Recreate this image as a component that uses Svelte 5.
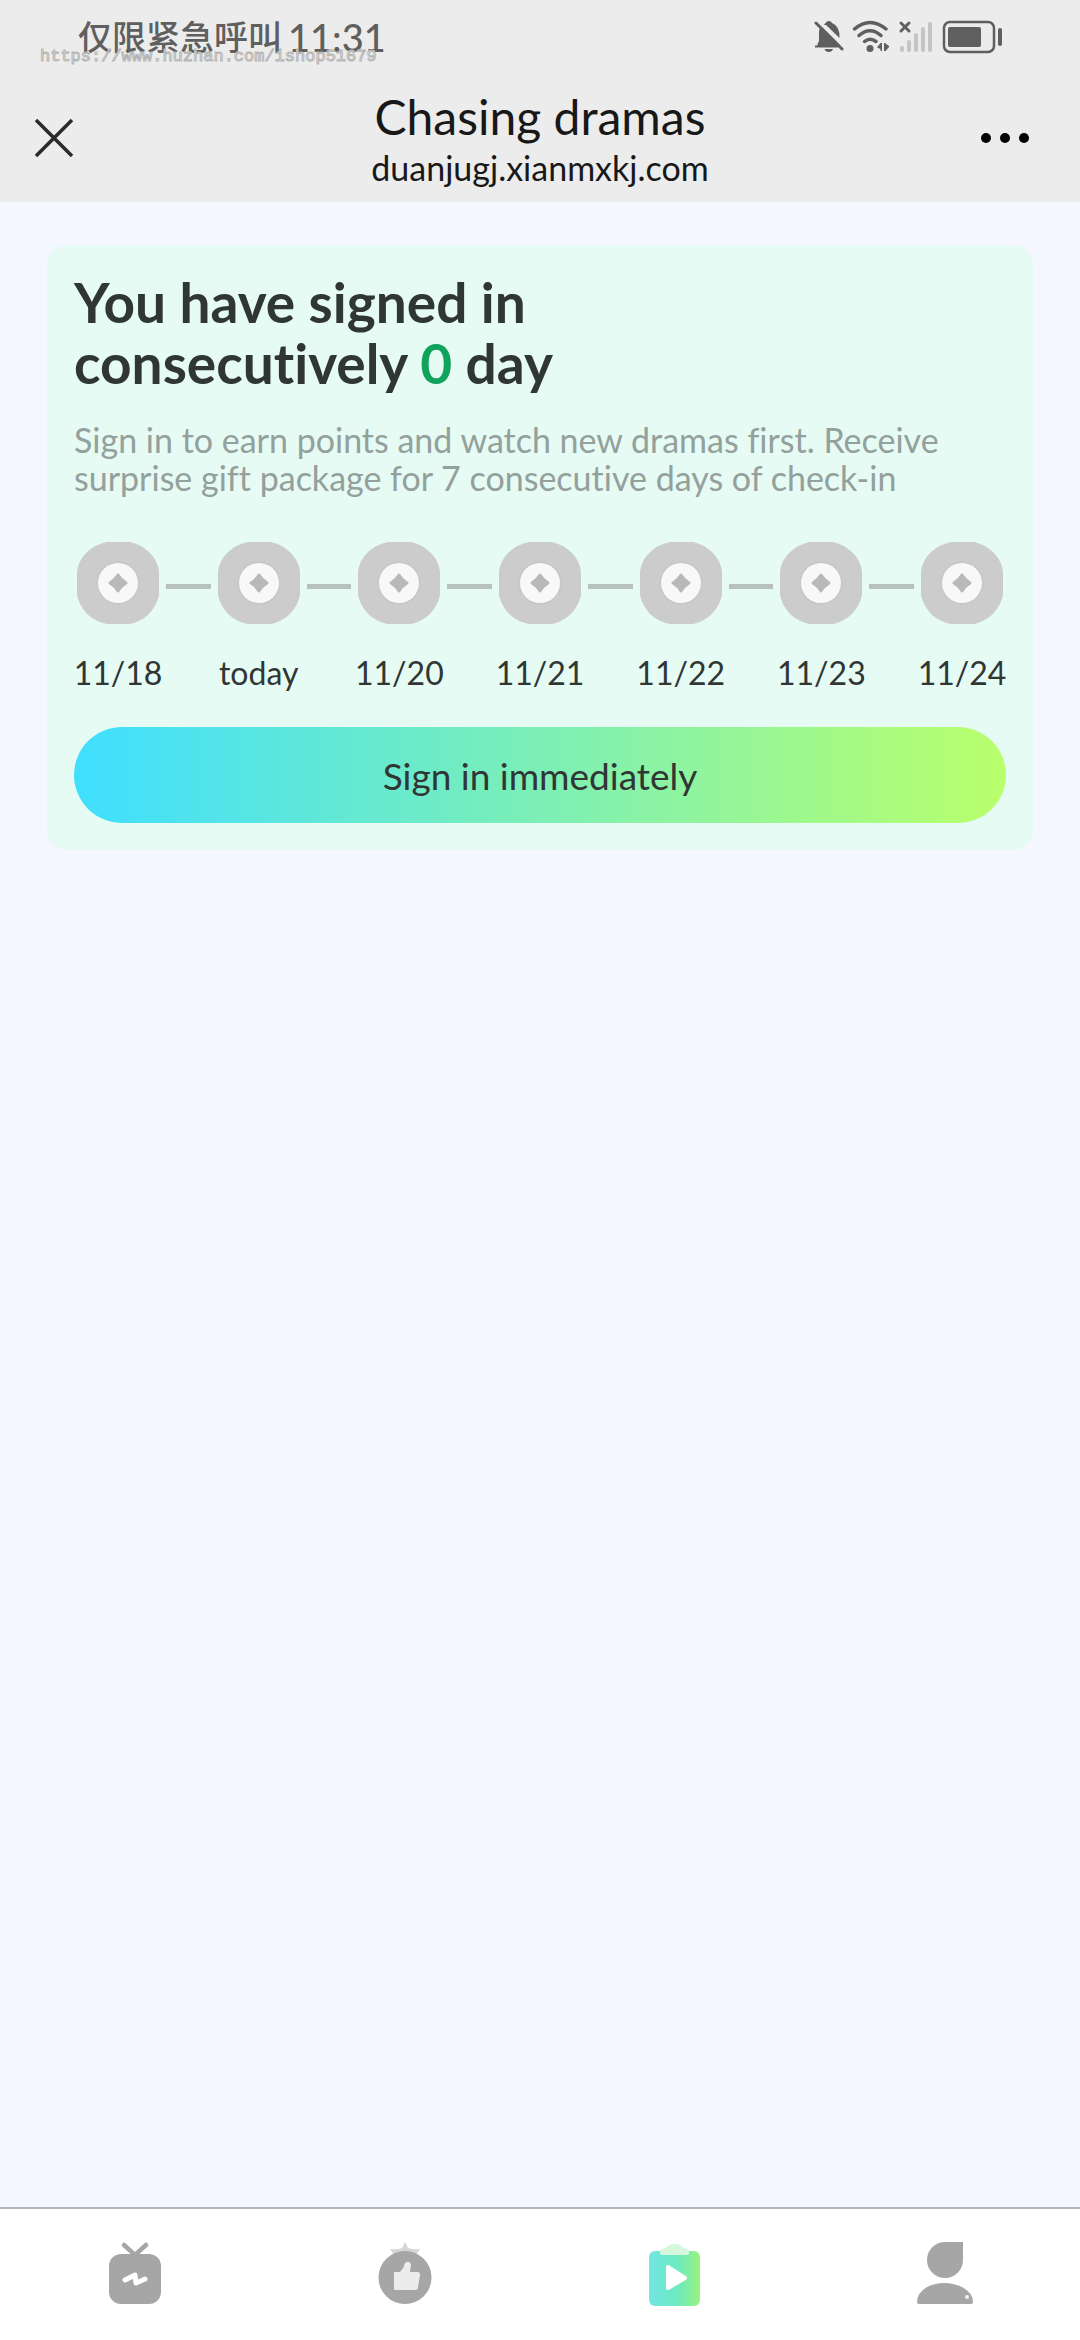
<script lang="ts">
	const days = ['11/18', 'today', '11/20', '11/21', '11/22', '11/23', '11/24'];

	let signedDays = $state(0);
	let activeTab = $state('sign');
</script>

<div class="page">
	<header>
		<div class="status">
			<span class="carrier">仅限紧急呼叫</span>
			<span class="time">11:31</span>
			<span class="watermark">https://www.huzhan.com/ishop51679</span>

			<div class="indicators">
				<svg class="bell" width="30" height="34" viewBox="0 0 30 34" aria-hidden="true">
					<path d="M3.500 26V24L5 21V12Q5 8 8 6L26 24V26Z" />
					<path d="M10 5Q12.500 1 15 1Q17 1 18 3Q26 6 25.500 18L12 5Z" />
					<path d="M1 26.500H24" stroke="#5f5f5f" stroke-width="2" />
					<path d="M10.500 29H19Q18 32 14.800 32Q11.500 32 10.500 29Z" />
					<path d="M4.500 1.500L29.500 26.500" stroke="#ececec" stroke-width="3" />
					<path d="M2 3L28 29" stroke="#5f5f5f" stroke-width="3" stroke-linecap="round" />
				</svg>
				<svg class="wifi" width="38" height="34" viewBox="0 0 38 34" aria-hidden="true">
					<g fill="none" stroke="#5f5f5f" stroke-width="3.500" stroke-linecap="round">
						<path d="M2.500 9Q18 -4 34 9" />
						<path d="M7 15.500Q18 6 29 15.500" />
						<path d="M12.500 21.500Q18 17 24 21.500" />
					</g>
					<circle cx="18" cy="28.500" r="3.500" />
					<path d="M30 23V31H28.500V29L25 27.500L28.500 23ZM32 23H33L37.500 26.500L33.500 31H32Z" />
				</svg>
				<svg class="signal" width="36" height="34" viewBox="0 0 36 34" aria-hidden="true">
					<path d="M3 3L11 11M11 3L3 11" stroke="#5f5f5f" stroke-width="3" stroke-linecap="round" />
					<path
						d="M4 28V30M11 22V30M18 15V30M25 9V30M32 4V30"
						stroke="#c5c5c5"
						stroke-width="4"
						stroke-linecap="round"
					/>
				</svg>
				<svg class="battery" width="62" height="34" viewBox="0 0 62 34" aria-hidden="true">
					<rect x="2" y="2" width="50" height="30" rx="6" fill="none" stroke="#5f5f5f" stroke-width="2.500" />
					<rect x="6" y="7" width="33" height="20" rx="2" />
					<rect x="56" y="8" width="4" height="18" rx="2" />
				</svg>
			</div>
		</div>

		<div class="titlebar">
			<button class="icon-btn" aria-label="Close">
				<svg width="40" height="40" viewBox="0 0 40 40">
					<path d="M2 2L38 38M38 2L2 38" stroke="#2b2b2b" stroke-width="3.500" />
				</svg>
			</button>
			<div class="titles">
				<h1>Chasing dramas</h1>
				<p>duanjugj.xianmxkj.com</p>
			</div>
			<button class="icon-btn more" aria-label="More">
				<svg width="50" height="12" viewBox="0 0 50 12">
					<circle cx="6" cy="6" r="5" />
					<circle cx="25" cy="6" r="5" />
					<circle cx="44" cy="6" r="5" />
				</svg>
			</button>
		</div>
	</header>

	<main>
		<section class="card">
			<h2>You have signed in<br />consecutively <em>{signedDays}</em> day</h2>
			<p class="hint">
				Sign in to earn points and watch new dramas first. Receive surprise gift package for 7
				consecutive days of check-in
			</p>

			<ol class="days">
				{#each days as day, i}
					{#if i > 0}
						<li class="link" aria-hidden="true"></li>
					{/if}
					<li class="day">
						<svg width="82" height="82" viewBox="0 0 82 82" aria-hidden="true">
							<path
								d="M30 0H53Q63 2 72 10Q81 19 82 30V53Q80 63 72 72Q63 80 53 82H30Q19 80 10 72Q2 63 0 53V30Q1 19 10 10Q19 2 30 0Z"
								fill="#cccccc"
							/>
							<circle cx="41" cy="41" r="21.500" fill="#c6c6c6" />
							<circle cx="41" cy="41" r="20" fill="#f8f8f8" />
							<path d="M41 33Q44 38 49 41Q44 44 41 49Q38 44 33 41Q38 38 41 33Z" fill="#b9b9b9" stroke="#b9b9b9" stroke-width="3" stroke-linejoin="round" />
						</svg>
						<span>{day}</span>
					</li>
				{/each}
			</ol>

			<button class="sign-btn">Sign in immediately</button>
		</section>
	</main>

	<nav>
		<button aria-label="Theater" aria-pressed={activeTab === 'theater'} onclick={() => (activeTab = 'theater')}>
			<svg width="60" height="66" viewBox="0 0 60 66">
				<path d="M19 4L30 14L41 4" fill="none" stroke="#a6a6a6" stroke-width="4.500" stroke-linecap="round" />
				<rect x="4" y="13" width="52" height="50" rx="12" fill="#a6a6a6" />
				<path d="M20 39L30 34L31 42L40 38" fill="none" stroke="#fff" stroke-width="5" stroke-linecap="round" stroke-linejoin="round" />
			</svg>
		</button>
		<button aria-label="Recommended" aria-pressed={activeTab === 'recommended'} onclick={() => (activeTab = 'recommended')}>
			<svg width="60" height="66" viewBox="0 0 60 66">
				<path d="M15 8Q22 9 27 7L30 1L33 7Q38 9 45 8L41 14H19Z" fill="#d6d6d6" />
				<circle cx="30" cy="36.500" r="26.500" fill="#a6a6a6" />
				<path d="M19 31H25Q29 27 30 22Q34 19 36 23L35 31H43Q45 31 45 34L43 46Q43 49 40 49H19Z" fill="#ececec" />
			</svg>
		</button>
		<button aria-label="Sign in" aria-pressed={activeTab === 'sign'} onclick={() => (activeTab = 'sign')}>
			<svg width="60" height="66" viewBox="0 0 60 66">
				<defs>
					<linearGradient id="board">
						<stop offset="0" stop-color="#72e6e2" />
						<stop offset="0.550" stop-color="#6ceac2" />
						<stop offset="1" stop-color="#97f37e" />
					</linearGradient>
				</defs>
				<rect x="4" y="10" width="51" height="55" rx="6" fill="url(#board)" />
				<path d="M15 9Q20 8 23 5Q30 1 37 5Q40 8 44 9V12Q44 14 41 14H18Q15 14 15 12Z" fill="#d5f8dc" />
				<path d="M23 26L40 37L23 47Z" fill="#fff" stroke="#fff" stroke-width="4" stroke-linejoin="round" />
			</svg>
		</button>
		<button aria-label="Me" aria-pressed={activeTab === 'me'} onclick={() => (activeTab = 'me')}>
			<svg width="60" height="66" viewBox="0 0 60 66">
				<path d="M30 1H48V19A18 18 0 1 1 30 1Z" fill="#a6a6a6" />
				<path d="M2 61Q2 52 12 46Q29 38 47 46Q58 52 58 61Q58 63 56 63H4Q2 63 2 61Z" fill="#a6a6a6" />
				<circle cx="52" cy="56" r="2" fill="#f2f2f2" />
			</svg>
		</button>
	</nav>
</div>

<style>
	:global(body) {
		margin: 0;
	}

	.page {
		display: flex;
		flex-direction: column;
		min-height: 100vh;
		background: #f4f7ff;
		color: #2f3634;
		font-family: Lato, 'Noto Sans CJK SC', sans-serif;
		font-variant-ligatures: none;
	}

	h1,
	h2,
	p,
	ol {
		margin: 0;
		padding: 0;
	}

	button {
		padding: 0;
		border: none;
		background: none;
		color: inherit;
		font-family: inherit;
		cursor: pointer;
	}

	svg {
		display: block;
	}

	header {
		background: #ececec;
	}

	.status {
		position: relative;
		display: flex;
		align-items: center;
		height: 74px;
		padding: 0 76px 0 78px;
		color: #5f5f5f;
		fill: #5f5f5f;
	}

	.carrier {
		font-size: 34px;
		font-weight: 500;
		line-height: 40px;
	}

	.time {
		margin-left: 6px;
		font-size: 38px;
		font-weight: 500;
		line-height: 40px;
	}

	.watermark {
		position: absolute;
		left: 40px;
		top: 47px;
		color: #f0f0f0;
		font-family: 'Liberation Mono', monospace;
		font-size: 17px;
		line-height: 20px;
		-webkit-text-stroke: 1px #b4b4b4;
	}

	.indicators {
		display: flex;
		gap: 8px;
		margin-left: auto;
	}

	.titlebar {
		display: grid;
		grid-template-columns: 80px 1fr 80px;
		align-items: center;
		height: 128px;
		padding: 0 34px;
		color: #181818;
	}

	.icon-btn.more {
		justify-self: end;
		margin-right: 16px;
	}

	.titles {
		padding-top: 4px;
		text-align: center;
	}

	h1 {
		font-size: 48px;
		font-weight: 400;
		line-height: 56px;
	}

	.titles p {
		font-size: 34px;
		line-height: 46px;
	}

	main {
		flex: 1;
		padding: 43px 47px;
	}

	.card {
		padding: 27px;
		border-radius: 20px;
		background: #e5fbf3;
	}

	h2 {
		font-size: 55px;
		font-weight: 700;
		line-height: 61px;
	}

	em {
		color: #0fa35c;
		font-style: normal;
	}

	.hint {
		margin-top: 27px;
		color: #94a09c;
		font-size: 34px;
		line-height: 38px;
	}

	.days {
		display: flex;
		margin-top: 45px;
		list-style: none;
	}

	.day {
		display: flex;
		flex-direction: column;
		align-items: center;
		width: 88px;
	}

	.day span {
		margin-top: 29px;
		font-size: 32px;
		line-height: 40px;
	}

	.link {
		flex: 1;
		height: 5px;
		margin: 42px 4px 0;
		background: #b9c1be;
	}

	.sign-btn {
		display: block;
		width: 100%;
		height: 96px;
		margin-top: 34px;
		border-radius: 48px;
		background: linear-gradient(90deg, #3fdfff, #b9ff6c);
		font-size: 37px;
	}

	nav {
		display: grid;
		grid-template-columns: repeat(4, 1fr);
		height: 131px;
		border-top: 2px solid #b4b5bb;
		background: #fff;
	}

	nav button {
		display: flex;
		align-items: flex-start;
		justify-content: center;
		padding-top: 32px;
	}
</style>
